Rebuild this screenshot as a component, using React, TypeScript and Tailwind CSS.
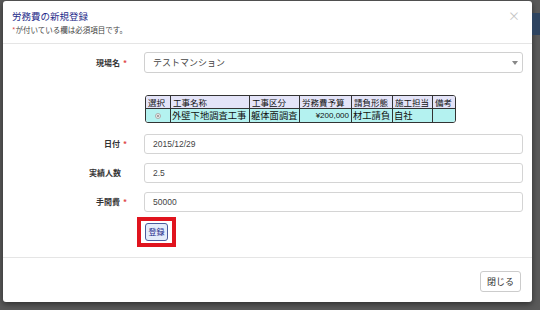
import React from 'react'

const jp = { fontFamily: '"Noto Sans CJK JP", "Noto Sans", sans-serif' }
const num = { fontFamily: '"Liberation Sans", "Noto Sans CJK JP", sans-serif' }

function Label({ text, required }: { text: string; required?: boolean }) {
  return (
    <div className="w-[141px] shrink-0 flex justify-end items-center pr-[17px] text-[8px] font-bold text-[#333]">
      <span className={required ? '' : 'mr-[6px]'}>{text}</span>
      {required && <span className="ml-[3px] text-[#e04848]">*</span>}
    </div>
  )
}

function TextRow({ label, value, required }: { label: string; value: string; required?: boolean }) {
  return (
    <div className="flex items-center h-[20px]">
      <Label text={label} required={required} />
      <div className="flex-1 h-full border border-[#d4d4d4] rounded-[3px] flex items-center pl-[8px] text-[8.5px] text-[#444]" style={num}>
        {value}
      </div>
    </div>
  )
}

const cols = [
  { h: '選択', w: 'w-[25px]' },
  { h: '工事名称', w: 'w-[79px]' },
  { h: '工事区分', w: 'w-[50px]' },
  { h: '労務費予算', w: 'w-[52px]' },
  { h: '請負形態', w: 'w-[41px]' },
  { h: '施工担当', w: 'w-[40px]' },
  { h: '備考', w: 'w-[22px]' },
]

export default function App() {
  return (
    <div className="w-[540px] h-[310px] bg-[#5a5a5a] flex overflow-hidden" style={jp}>
      <div className="mt-[1px] ml-[3px] w-[529px] h-[301px] bg-white rounded-[3px] shadow-[0_2px_6px_rgba(0,0,0,0.5)] flex flex-col">
        <div className="h-[43px] border-b border-[#e5e5e5] flex justify-between pl-[9px] pr-[12px] pt-[8px]">
          <div className="flex flex-col">
            <div className="text-[9.5px] leading-[14px] text-[#1e2a8a]">労務費の新規登録</div>
            <div className="text-[7.5px] leading-[12px] text-[#444] mt-[1px]">
              <span className="text-[#e04848]">*</span>が付いている欄は必須項目です。
            </div>
          </div>
          <div className="text-[12px] leading-[14px] text-[#c4c4c4]">×</div>
        </div>

        <div className="h-[214px] border-b border-[#e5e5e5] pr-[9px] pt-[8px] flex flex-col">
          <div className="flex items-center h-[21px]">
            <Label text="現場名" required />
            <div className="flex-1 h-full border border-[#d0d0d0] rounded-[3px] flex items-center justify-between pl-[8px] pr-[4px] text-[9px] text-[#444]">
              <span>テストマンション</span>
              <svg width="6" height="4" viewBox="0 0 6 4"><path d="M0 0h6L3 4z" fill="#888" /></svg>
            </div>
          </div>

          <div className="ml-[142px] mt-[22px] w-fit border border-[#333] rounded-[3px] overflow-hidden text-[8.5px] leading-[12px] text-[#111]">
            <div className="flex bg-[#e4e4f8]">
              {cols.map((c, i) => (
                <div key={c.h} className={`${c.w} pl-[2px] ${i < cols.length - 1 ? 'border-r border-[#333]' : ''}`}>{c.h}</div>
              ))}
            </div>
            <div className="flex bg-[#b4f2f0] border-t border-[#333] h-[14px] items-center text-[9.3px] leading-[13px] whitespace-nowrap">
              <div className="w-[25px] h-full border-r border-[#333] flex items-center justify-center">
                <div className="w-[6px] h-[6px] rounded-full border border-[#aaa] bg-[#eee] flex items-center justify-center">
                  <div className="w-[2px] h-[2px] rounded-full bg-[#888]" />
                </div>
              </div>
              <div className="w-[79px] h-full border-r border-[#333] pl-[1px] overflow-hidden">外壁下地調査工事</div>
              <div className="w-[50px] h-full border-r border-[#333] pl-[1px] overflow-hidden">躯体面調査</div>
              <div className="w-[52px] h-full border-r border-[#333] pr-[2px] text-right text-[8px]" style={num}>¥200,000</div>
              <div className="w-[41px] h-full border-r border-[#333] pl-[1px] overflow-hidden">材工請負</div>
              <div className="w-[40px] h-full border-r border-[#333] pl-[1px]">自社</div>
              <div className="w-[22px] h-full" />
            </div>
          </div>

          <div className="mt-[11px] flex flex-col gap-[9px]">
            <TextRow label="日付" value="2015/12/29" required />
            <TextRow label="実績人数" value="2.5" />
            <TextRow label="手間費" value="50000" required />
          </div>

          <div className="ml-[134px] mt-[5px] w-[39px] h-[30px] border-[4px] border-[#e0141e] flex items-center justify-center">
            <div className="w-[23px] h-[18px] bg-[#e4ecfa] border border-[#4a5a9c] rounded-[3px] flex items-center justify-center text-[8px] text-[#1e2a8a]">
              登録
            </div>
          </div>
        </div>

        <div className="flex-1 flex justify-end items-start pt-[13px] pr-[11px]">
          <div className="w-[41px] h-[21px] border border-[#ccc] rounded-[3px] flex items-center justify-center text-[9px] text-[#333]">
            閉じる
          </div>
        </div>
      </div>
      <div className="flex-1 pt-[13px]">
        <div className="h-[22px] bg-[#2e4460]" />
      </div>
    </div>
  )
}
